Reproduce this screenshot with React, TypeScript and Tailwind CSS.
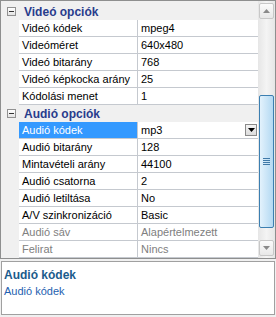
import React from 'react';

type Row = { label: string; value: string; selected?: boolean; disabled?: boolean; dropdown?: boolean };

const videoRows: Row[] = [
  { label: 'Videó kódek', value: 'mpeg4' },
  { label: 'Videóméret', value: '640x480' },
  { label: 'Videó bitarány', value: '768' },
  { label: 'Videó képkocka arány', value: '25' },
  { label: 'Kódolási menet', value: '1' },
];

const audioRows: Row[] = [
  { label: 'Audió kódek', value: 'mp3', selected: true, dropdown: true },
  { label: 'Audió bitarány', value: '128' },
  { label: 'Mintavételi arány', value: '44100' },
  { label: 'Audió csatorna', value: '2' },
  { label: 'Audió letiltása', value: 'No' },
  { label: 'A/V szinkronizáció', value: 'Basic' },
  { label: 'Audió sáv', value: 'Alapértelmezett', disabled: true },
  { label: 'Felirat', value: 'Nincs', disabled: true },
];

const Category: React.FC<{ title: string }> = ({ title }) => (
  <div className="flex h-[17px] items-center bg-[#f0f0f0]">
    <div className="flex w-[18px] justify-center pl-[3px]">
      <div className="flex h-[9px] w-[9px] items-center justify-center border border-[#919191] bg-gradient-to-b from-white to-[#e3e3e3]">
        <div className="h-[1px] w-[5px] bg-[#333]" />
      </div>
    </div>
    <span className="pl-[5px] text-[12px] font-bold text-[#283c8c]">{title}</span>
  </div>
);

const PropRow: React.FC<{ row: Row }> = ({ row }) => (
  <div className="flex h-[17px] bg-[#f0f0f0]">
    <div className="w-[18px]" />
    <div
      className={`flex w-[118px] items-center border-b border-[#c5c9cf] pl-[3px] ${
        row.selected ? 'bg-[#3399ff] text-white' : row.disabled ? 'bg-white text-[#808080]' : 'bg-white text-black'
      }`}
    >
      {row.label}
    </div>
    <div
      className={`flex flex-1 items-center justify-between border-b border-l border-[#c5c9cf] bg-white pl-[3px] pr-[1px] ${
        row.disabled ? 'text-[#808080]' : 'text-black'
      }`}
    >
      <span>{row.value}</span>
      {row.dropdown && (
        <div className="flex h-[12px] w-[12px] items-center justify-center border border-[#8a8a8a] bg-gradient-to-b from-[#f4f4f4] to-[#dcdcdc]">
          <svg width="7" height="4" viewBox="0 0 7 4">
            <path d="M0 0 H7 L3.5 4 Z" fill="#000" />
          </svg>
        </div>
      )}
    </div>
  </div>
);

const ScrollBar: React.FC = () => (
  <div className="flex w-[17px] flex-col bg-gradient-to-r from-[#e6e6e6] via-[#f4f4f4] to-[#e6e6e6] pt-[2px]">
    <div className="mx-[1px] flex h-[16px] items-center justify-center rounded-[2px] border border-[#c8c8c8] bg-gradient-to-b from-[#fbfbfb] to-[#e8e8e8]">
      <svg width="7" height="4" viewBox="0 0 7 4">
        <path d="M0 4 H7 L3.5 0 Z" fill="#8a8a8a" />
      </svg>
    </div>
    <div className="h-[76px]" />
    <div className="mx-[1px] flex h-[133px] items-center justify-center rounded-[2px] border border-[#3c7fb1] bg-gradient-to-r from-[#e3f2fc] to-[#b3d9f2]">
      <div className="flex flex-col gap-[1px]">
        <div className="h-[1px] w-[7px] bg-[#3f79a8]" />
        <div className="h-[1px] w-[7px] bg-[#3f79a8]" />
        <div className="h-[1px] w-[7px] bg-[#3f79a8]" />
        <div className="h-[1px] w-[7px] bg-[#3f79a8]" />
      </div>
    </div>
    <div className="flex-1" />
    <div className="mx-[1px] mb-[2px] flex h-[16px] items-center justify-center rounded-[2px] border border-[#c8c8c8] bg-gradient-to-b from-[#fbfbfb] to-[#e8e8e8]">
      <svg width="7" height="4" viewBox="0 0 7 4">
        <path d="M0 0 H7 L3.5 4 Z" fill="#8a8a8a" />
      </svg>
    </div>
  </div>
);

export default function App() {
  return (
    <div className="flex h-[317px] w-[276px] flex-col bg-[#f0f0f0] text-[11px] font-['Liberation_Sans',Arial,sans-serif] leading-[16px]">
      <div className="flex h-[259px] border border-[#8e8f8f]">
        <div className="flex flex-1 flex-col bg-[#f0f0f0] pt-[2px]">
          <Category title="Videó opciók" />
          {videoRows.map(r => (
            <PropRow key={r.label} row={r} />
          ))}
          <Category title="Audió opciók" />
          {audioRows.map(r => (
            <PropRow key={r.label} row={r} />
          ))}
        </div>
        <ScrollBar />
      </div>
      <div className="mx-[1px] mt-[2px] h-[54px] border border-[#a0a0a0] bg-white px-[2px] pt-[5px]">
        <div className="text-[12px] font-bold text-[#1b5b8c]">Audió kódek</div>
        <div className="text-[#1f5fb0]">Audió kódek</div>
      </div>
    </div>
  );
}
